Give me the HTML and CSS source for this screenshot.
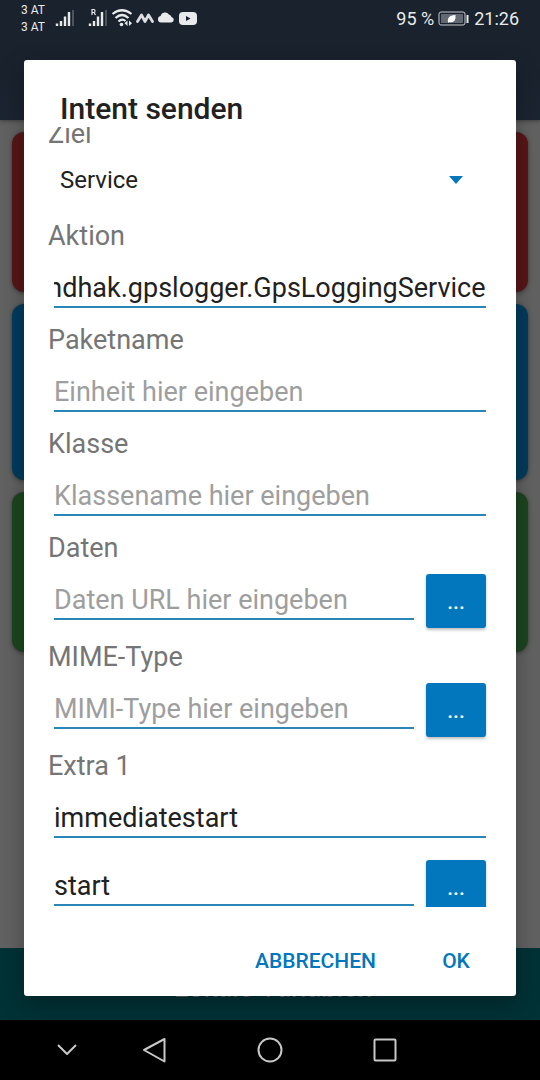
FILE: index.html
```html
<!DOCTYPE html>
<html lang="de">
<head>
    <meta charset="UTF-8">
    <meta name="viewport" content="width=device-width, initial-scale=1.0">
    <title>Intent senden</title>
    <link rel="stylesheet" href="styles.css">
</head>
<body>
    <div class="app">
        <header class="app-header">
            <div class="status-bar">
                <div class="carriers">
                    <span>3 AT</span>
                    <span>3 AT</span>
                </div>
                <svg class="signal" width="20" height="20" viewBox="0 0 20 20">
                    <path d="M2 15.500v2.500M6 13v5M10 8.500v9.500M14 4v14" stroke="#e8eaec" stroke-width="2.400"/>
                    <path d="M18 2v16" stroke="#4b535e" stroke-width="2"/>
                </svg>
                <svg class="signal-roaming" width="20" height="20" viewBox="0 0 20 20">
                    <path d="M2 15.500v2.500M6 13v5M10 8.500v9.500M14 4v14" stroke="#e8eaec" stroke-width="2.400"/>
                    <path d="M18 2v16" stroke="#4b535e" stroke-width="2"/>
                    <path d="M4 7V1.500h2q1 0 1 1.500T6 4.500H4M6 4.500L7.500 7" stroke="#e8eaec" fill="none" stroke-width="1.200"/>
                </svg>
                <div class="status-icons">
                    <svg width="22" height="20" viewBox="0 0 22 20" fill="none" stroke="#e8eaec" stroke-width="2.200">
                        <path d="M1.500 6Q11-1.500 20.500 6M4.500 10Q11 4 17.500 10M7.500 13.500Q11 10 14.500 13"/>
                        <circle cx="10.500" cy="16.500" r="1.800" fill="#e8eaec" stroke="none"/>
                        <path d="M16.500 12.500v5.500l-3-2.700zM18 12.500v5.500l3-2.700z" fill="#e8eaec" stroke="none"/>
                    </svg>
                    <svg width="18" height="20" viewBox="0 0 18 20" fill="none" stroke="#dcdee1" stroke-width="2.800" stroke-linejoin="round" stroke-linecap="round">
                        <path d="M1.500 13.500L5.500 7l3.500 6.500L12.500 7l4 6.500"/>
                    </svg>
                    <svg width="18" height="20" viewBox="0 0 18 20" fill="#e8eaec">
                        <path d="M4 14.500a3.300 3.300 0 0 1-.5-6.500 4.800 4.800 0 0 1 8.500-1.500 3.500 3.500 0 0 1 2.500 2.500 2.800 2.800 0 0 1 0 5.500z"/>
                    </svg>
                    <svg width="20" height="20" viewBox="0 0 20 20">
                        <rect x="1" y="4" width="18" height="13" rx="4" fill="#e8eaec"/>
                        <path d="M8 8v5l4.500-2.500z" fill="#1a222d"/>
                    </svg>
                </div>
                <div class="status-right">
                    <span>95 %</span>
                    <svg width="32" height="20" viewBox="0 0 32 20">
                        <rect x="1" y="4" width="26" height="13" rx="2" fill="#1a222d" stroke="#c9ccd0"/>
                        <rect x="3" y="6" width="22" height="9" fill="#626973"/>
                        <path d="M29.500 7v8" stroke="#e8eaec" stroke-width="2"/>
                        <path d="M10 14.500Q9 10 12.500 8q2.500-1 5-1 .5 6-3 7-2 .7-3 0l-1 .8z" fill="#fff"/>
                    </svg>
                    <span>21:26</span>
                </div>
            </div>
        </header>
        <main class="cards">
            <div class="card card-red"></div>
            <div class="card card-blue"></div>
            <div class="card card-green"></div>
        </main>
        <footer class="variables-bar">Lokale Variablen</footer>

        <form class="dialog" role="dialog" aria-labelledby="dialogTitle">
            <h2 class="dialog-title" id="dialogTitle">Intent senden</h2>
            <div class="dialog-body" id="dialogBody">
                <label for="target">Ziel</label>
                <div class="select-wrap">
                    <select id="target">
                        <option>Service</option>
                    </select>
                    <svg class="arrow" width="16" height="8" viewBox="0 0 16 8"><path d="M1 0h14L8 8z" fill="#0277bd"/></svg>
                </div>

                <label for="action">Aktion</label>
                <div class="field">
                    <input type="text" id="action" value="com.mendhak.gpslogger.GpsLoggingService">
                </div>

                <label for="package">Paketname</label>
                <div class="field">
                    <input type="text" id="package" placeholder="Einheit hier eingeben">
                </div>

                <label for="class">Klasse</label>
                <div class="field">
                    <input type="text" id="class" placeholder="Klassename hier eingeben">
                </div>

                <label for="data">Daten</label>
                <div class="field field-pick">
                    <input type="text" id="data" placeholder="Daten URL hier eingeben">
                    <button type="button" class="pick">...</button>
                </div>

                <label for="mime">MIME-Type</label>
                <div class="field field-pick">
                    <input type="text" id="mime" placeholder="MIMI-Type hier eingeben">
                    <button type="button" class="pick">...</button>
                </div>

                <label for="extraName">Extra 1</label>
                <div class="field field-name">
                    <input type="text" id="extraName" value="immediatestart">
                </div>
                <div class="field field-pick">
                    <input type="text" id="extraValue" value="start" aria-label="Extra 1">
                    <button type="button" class="pick">...</button>
                </div>
            </div>
            <div class="dialog-actions">
                <button type="button">ABBRECHEN</button>
                <button type="button">OK</button>
            </div>
        </form>
    </div>

    <nav class="nav-bar">
        <button type="button" class="nav-hide" aria-label="Tastatur ausblenden">
            <svg width="28" height="28" viewBox="0 0 28 28"><path d="M5 9l9 9 9-9"/></svg>
        </button>
        <button type="button" aria-label="Zurück">
            <svg width="28" height="28" viewBox="0 0 28 28"><path d="M24.500 3v22.500L4 14z"/></svg>
        </button>
        <button type="button" aria-label="Startseite">
            <svg width="28" height="28" viewBox="0 0 28 28"><circle cx="14" cy="14" r="11.500"/></svg>
        </button>
        <button type="button" aria-label="Übersicht">
            <svg width="28" height="28" viewBox="0 0 28 28"><rect x="2.500" y="3.500" width="21" height="21" rx="1"/></svg>
        </button>
    </nav>

    <script>
        // Keep the end of a long action name in view
        const action = document.getElementById('action');
        action.scrollLeft = action.scrollWidth;

        // The list starts slightly scrolled
        document.getElementById('dialogBody').scrollTop = 9;
    </script>
</body>
</html>
```
FILE: styles.css
```css
* {
    box-sizing: border-box;
}
body {
    margin: 0;
    height: 100vh;
    display: flex;
    flex-direction: column;
    background: #000;
    font-family: Roboto, "Liberation Sans", sans-serif;
}
button, input, select {
    font-family: inherit;
    border: none;
    outline: none;
    background: none;
}

/* Dimmed app behind the dialog */
.app {
    position: relative;
    flex: 1;
    min-height: 0;
    display: flex;
    flex-direction: column;
    background: #626262;
}
.app-header {
    height: 120px;
    flex-shrink: 0;
    background: linear-gradient(#1a222d 60px, #1b2431);
    box-shadow: 0 1px 4px rgba(0, 0, 0, 0.4);
}
.status-bar {
    display: flex;
    align-items: center;
    height: 36px;
    padding: 0 21px;
    color: #e8eaec;
}
.carriers {
    display: flex;
    flex-direction: column;
    padding-top: 2px;
    font-size: 12px;
    line-height: 17px;
}
.signal {
    margin-left: 10px;
}
.signal-roaming {
    margin: 0 3px 0 13px;
}
.status-icons {
    display: flex;
    gap: 3px;
}
.status-right {
    display: flex;
    align-items: center;
    gap: 4px;
    margin-left: auto;
    font-size: 18px;
}
.cards {
    flex: 1;
    padding: 12px;
    display: flex;
    flex-direction: column;
    gap: 12px;
}
.card {
    height: 160px;
    border-radius: 12px;
    box-shadow: 0 1px 4px rgba(0, 0, 0, 0.4);
}
.card-red {
    background: #571616;
}
.card-blue {
    height: 176px;
    background: #003c5e;
}
.card-green {
    background: #1c461f;
}
.variables-bar {
    height: 72px;
    flex-shrink: 0;
    padding-left: 6px;
    background: #003236;
    color: #626262;
    font-size: 27px;
    line-height: 80px;
    text-align: center;
}

/* Dialog */
.dialog {
    position: absolute;
    inset: 60px 24px 24px;
    display: flex;
    flex-direction: column;
    background: #fff;
    border-radius: 3px;
    box-shadow: 0 8px 24px rgba(0, 0, 0, 0.3);
}
.dialog-title {
    margin: 0;
    padding: 31px 36px 0;
    font-size: 30px;
    font-weight: 500;
    line-height: 36px;
    color: #212121;
}
.dialog-body {
    flex: 1;
    min-height: 0;
    padding: 0 24px 24px;
    overflow-y: auto;
    scrollbar-width: none;
}
label {
    display: block;
    font-size: 27px;
    line-height: 32px;
    color: #757575;
}
.select-wrap {
    display: flex;
    align-items: center;
    margin: 0 6px 10px;
}
select {
    appearance: none;
    flex: 1;
    height: 60px;
    margin-right: -38px;
    padding: 0 38px 0 6px;
    font-size: 24px;
    color: #212121;
}
.arrow {
    margin-right: 22px;
    pointer-events: none;
}
.field {
    display: flex;
    align-items: flex-start;
    gap: 12px;
    margin: 0 6px 16px;
}
.field-pick {
    margin-bottom: 13px;
}
.field-name {
    margin-bottom: 12px;
}
input {
    flex: 1;
    min-width: 0;
    height: 56px;
    padding: 20px 0 2px;
    border-bottom: 2px solid #2a85b8;
    font-size: 27px;
    color: #212121;
}
input::placeholder {
    color: #9e9e9e;
}
.pick {
    width: 60px;
    height: 54px;
    margin-top: 10px;
    padding: 2px 0 0;
    border-radius: 3px;
    background: #0277bd;
    box-shadow: 0 2px 3px rgba(0, 0, 0, 0.25);
    color: #fff;
    font-size: 21px;
    font-weight: 500;
}
.dialog-actions {
    display: flex;
    justify-content: flex-end;
    gap: 20px;
    padding: 27px 12px 8px;
}
.dialog-actions button {
    min-width: 96px;
    height: 54px;
    padding: 0 12px;
    color: #0277bd;
    font-size: 21px;
    font-weight: 500;
}

/* System navigation */
.nav-bar {
    height: 60px;
    flex-shrink: 0;
    display: flex;
    padding: 0 96px 0 38px;
}
.nav-bar button {
    flex: 1;
    padding: 0;
}
.nav-bar .nav-hide {
    flex: 0 0 58px;
}
.nav-bar svg {
    display: block;
    margin: auto;
    fill: none;
    stroke: #c8c8c8;
    stroke-width: 2;
    stroke-linejoin: round;
}
```
